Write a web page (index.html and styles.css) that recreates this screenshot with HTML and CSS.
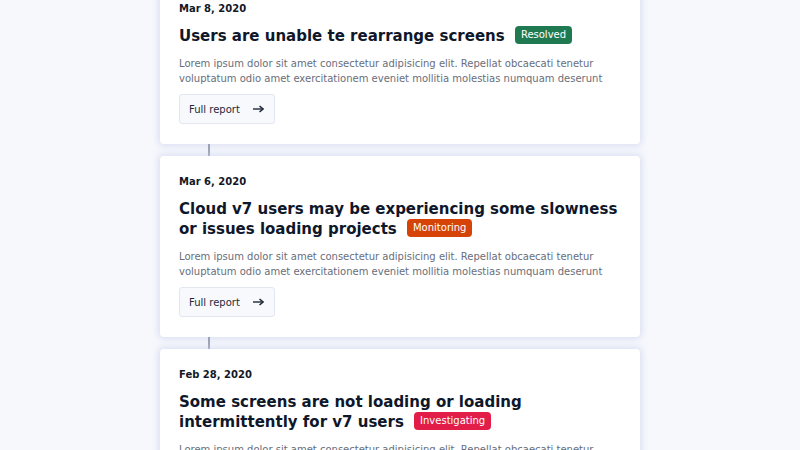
FILE: index.html
```html
<!DOCTYPE html>
<html lang="en">
<head>
<meta charset="utf-8">
<title>Incidents</title>
<link rel="stylesheet" href="styles.css">
</head>
<body>
<main class="timeline">
  <article class="card">
    <p class="date">Mar 8, 2020</p>
    <h2 class="title">Users are unable te rearrange screens <span class="badge badge-resolved">Resolved</span></h2>
    <p class="desc">Lorem ipsum dolor sit amet consectetur adipisicing elit. Repellat obcaecati tenetur voluptatum odio amet exercitationem eveniet mollitia molestias numquam deserunt</p>
    <a class="btn" href="#">Full report <svg class="arrow" width="11" height="8" viewBox="0 0 11 8"><path d="M0 4h9" stroke="#1f2937" stroke-width="1.4"/><path d="M6.5 1l3.5 3-3.5 3" fill="none" stroke="#1f2937" stroke-width="1.5"/></svg></a>
  </article>
  <div class="connector"></div>
  <article class="card">
    <p class="date">Mar 6, 2020</p>
    <h2 class="title">Cloud v7 users may be experiencing some slowness or issues loading projects <span class="badge badge-monitoring">Monitoring</span></h2>
    <p class="desc">Lorem ipsum dolor sit amet consectetur adipisicing elit. Repellat obcaecati tenetur voluptatum odio amet exercitationem eveniet mollitia molestias numquam deserunt</p>
    <a class="btn" href="#">Full report <svg class="arrow" width="11" height="8" viewBox="0 0 11 8"><path d="M0 4h9" stroke="#1f2937" stroke-width="1.4"/><path d="M6.5 1l3.5 3-3.5 3" fill="none" stroke="#1f2937" stroke-width="1.5"/></svg></a>
  </article>
  <div class="connector"></div>
  <article class="card">
    <p class="date">Feb 28, 2020</p>
    <h2 class="title">Some screens are not loading or loading intermittently for v7 users <span class="badge badge-investigating">Investigating</span></h2>
    <p class="desc">Lorem ipsum dolor sit amet consectetur adipisicing elit. Repellat obcaecati tenetur voluptatum odio amet exercitationem eveniet mollitia molestias numquam deserunt</p>
    <a class="btn" href="#">Full report <svg class="arrow" width="11" height="8" viewBox="0 0 11 8"><path d="M0 4h9" stroke="#1f2937" stroke-width="1.4"/><path d="M6.5 1l3.5 3-3.5 3" fill="none" stroke="#1f2937" stroke-width="1.5"/></svg></a>
  </article>
</main>
</body>
</html>
```
FILE: styles.css
```css
html, body {
  margin: 0;
  padding: 0;
  background: #f6f8fc;
  font-family: "DejaVu Sans", sans-serif;
  overflow: hidden;
}
.timeline {
  width: 480px;
  margin: -17px auto 0;
  display: flex;
  flex-direction: column;
}
.card {
  background: #ffffff;
  border-radius: 4px;
  padding: 18px 19px 20px;
  display: flex;
  flex-direction: column;
  align-items: flex-start;
  box-shadow: 0 0 6px 2px rgba(196, 204, 235, 0.55);
}
.connector {
  width: 2px;
  height: 12px;
  margin-left: 48px;
  background: #9ca3b4;
}
.date {
  margin: 0;
  font-size: 10px;
  font-weight: bold;
  color: #111827;
  line-height: 15px;
}
.title {
  margin: 10px 0 0;
  font-size: 15px;
  font-weight: bold;
  color: #0f172a;
  line-height: 20px;
}
.badge {
  display: inline-block;
  vertical-align: 3px;
  margin-left: 5px;
  padding: 0 6px;
  height: 18px;
  line-height: 18px;
  border-radius: 4px;
  font-size: 10px;
  font-weight: normal;
  color: #ffffff;
}
.badge-resolved { background: #1f7a52; }
.badge-monitoring { background: #d54307; }
.badge-investigating { background: #e11d48; }
.desc {
  margin: 10px 0 0;
  font-size: 10px;
  line-height: 15px;
  color: #686e7b;
}
.btn {
  margin-top: 8px;
  display: inline-flex;
  align-items: center;
  gap: 13px;
  height: 30px;
  box-sizing: border-box;
  padding: 0 10px 0 9px;
  border: 1px solid #e1e6f0;
  border-radius: 3px;
  background: #f7f9fd;
  color: #1f2937;
  font-size: 10px;
  text-decoration: none;
}
.arrow { display: block; }
```
